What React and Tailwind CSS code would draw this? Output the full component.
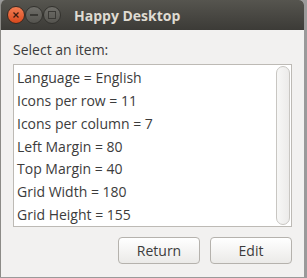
const items = [
  "Language = English",
  "Icons per row = 11",
  "Icons per column = 7",
  "Left Margin = 80",
  "Top Margin = 40",
  "Grid Width = 180",
  "Grid Height = 155",
];

const WinButton = ({ kind }) => (
  <div
    className={
      kind === "close"
        ? "w-[18px] h-[18px] rounded-full flex items-center justify-center bg-gradient-to-b from-[#f27d52] to-[#d9481b] border border-[#3a2a22]"
        : "w-[18px] h-[18px] rounded-full flex items-center justify-center bg-gradient-to-b from-[#6f6e69] to-[#55544f] border border-[#33322e]"
    }
  >
    {kind === "close" && (
      <svg width="8" height="8" viewBox="0 0 8 8">
        <path d="M1.5 1.5 L6.5 6.5 M6.5 1.5 L1.5 6.5" stroke="#3b1d12" strokeWidth="1.3" />
      </svg>
    )}
    {kind === "min" && <div className="w-[8px] h-[1.5px] bg-[#3a3935]" />}
    {kind === "max" && <div className="w-[8px] h-[8px] border border-[#3a3935]" />}
  </div>
);

const App = () => {
  return (
    <div className="w-[307px] h-[278px] bg-[#9a9a9a] font-['Open_Sans',sans-serif]">
      <div className="w-[304px] h-[277px] flex flex-col bg-[#f2f1f0] rounded-t-[5px] overflow-hidden border-l border-[#8c8b87]">
        <div className="h-[30px] flex items-center pl-[6px] bg-gradient-to-b from-[#56554f] to-[#3c3b37]">
          <div className="flex items-center">
            <WinButton kind="close" />
            <WinButton kind="min" />
            <WinButton kind="max" />
          </div>
          <span className="ml-[13px] text-[14px] font-bold text-[#dfdbd2]">Happy Desktop</span>
        </div>
        <div className="flex flex-col px-[12px] pt-[10px]">
          <span className="text-[14px] text-[#3c3c3c] leading-[20px]">Select an item:</span>
          <div className="mt-[4px] h-[163px] bg-white border border-[#bdbab5] flex">
            <div className="flex-1 flex flex-col pl-[3px] pt-[1px]">
              {items.map((it) => (
                <div key={it} className="h-[23.3px] flex items-center text-[14px] text-[#3c3c3c]">
                  {it}
                </div>
              ))}
            </div>
            <div className="w-[14px] mr-[1px] my-[1px] rounded-full border border-[#c8c6c2] bg-gradient-to-r from-[#f7f7f6] to-[#ecebea]" />
          </div>
          <div className="flex justify-end gap-[10px] mt-[10px]">
            <button className="w-[82px] h-[27px] rounded-[4px] border border-[#b5b2ad] bg-gradient-to-b from-white to-[#ebeae8] text-[14px] text-[#3c3c3c]">
              Return
            </button>
            <button className="w-[82px] h-[27px] rounded-[4px] border border-[#b5b2ad] bg-gradient-to-b from-white to-[#ebeae8] text-[14px] text-[#3c3c3c]">
              Edit
            </button>
          </div>
        </div>
      </div>
    </div>
  );
};

export default App;
